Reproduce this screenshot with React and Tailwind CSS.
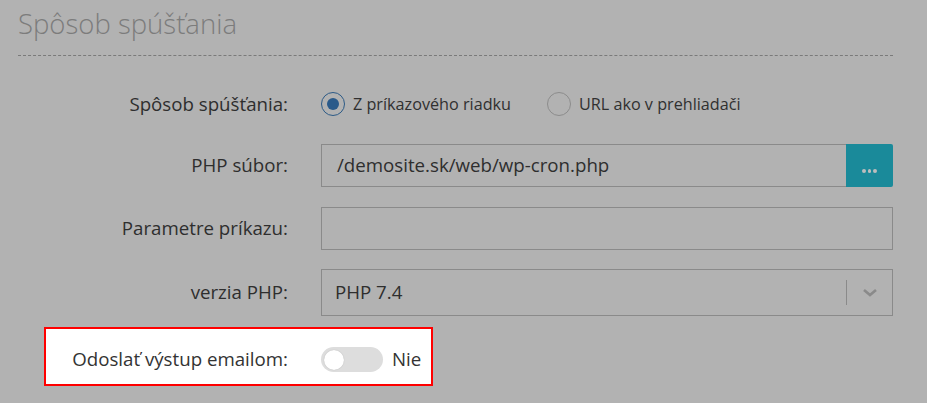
import React from 'react';

const font = { fontFamily: '"Open Sans", "Noto Sans", sans-serif' };

const Label = ({ children }) => (
  <div className="w-[270px] shrink-0 text-right text-[18.7px] text-[#2e2e2e]">{children}</div>
);

const Radio = ({ checked, label }) => (
  <label className="flex items-center">
    {checked ? (
      <span className="flex h-[24px] w-[24px] items-center justify-center rounded-full border-[1.5px] border-[#2c5a86]">
        <span className="h-[12px] w-[12px] rounded-full bg-[#2a5a8a]" />
      </span>
    ) : (
      <span className="h-[24px] w-[24px] rounded-full border-[1.5px] border-[#8c8c8c]" />
    )}
    <span className="ml-[8px] text-[16.2px] text-[#303030]">{label}</span>
  </label>
);

export default function App() {
  return (
    <div className="h-[403px] w-full overflow-hidden bg-[#b2b2b2]" style={font}>
      <div className="w-[893px] pl-[18px]">
        {/* Header */}
        <h2 className="pt-[7px] text-[27.5px] font-light leading-[34px] text-[#7c7c7c]">Spôsob spúšťania</h2>
        <div className="mt-[14px] border-t border-dashed border-[#7a7a7a]" />

        {/* Run mode */}
        <div className="mt-[27px] flex h-[43px] items-center">
          <Label>Spôsob spúšťania:</Label>
          <div className="ml-[33px] flex items-center gap-[36px]">
            <Radio checked label="Z príkazového riadku" />
            <Radio label="URL ako v prehliadači" />
          </div>
        </div>

        {/* PHP file */}
        <div className="mt-[18px] flex h-[43px] items-center">
          <Label>PHP súbor:</Label>
          <div className="ml-[33px] flex h-full flex-1">
            <div className="flex flex-1 items-center border border-r-0 border-[#8a8a8a] pl-[15px] text-[18.7px] text-[#2e2e2e]">
              /demosite.sk/web/wp-cron.php
            </div>
            <button className="flex w-[47px] items-center justify-center gap-[2px] rounded-r-[2px] bg-[#1a8a9a] pt-[11px]">
              <span className="h-[3.5px] w-[3.5px] rounded-full bg-[#bdbdbd]" />
              <span className="h-[3.5px] w-[3.5px] rounded-full bg-[#bdbdbd]" />
              <span className="h-[3.5px] w-[3.5px] rounded-full bg-[#bdbdbd]" />
            </button>
          </div>
        </div>

        {/* Params */}
        <div className="mt-[20px] flex h-[43px] items-center">
          <Label>Parametre príkazu:</Label>
          <div className="ml-[33px] h-full flex-1 border border-[#8a8a8a]" />
        </div>

        {/* PHP version */}
        <div className="mt-[19px] flex h-[47px] items-center">
          <Label>verzia PHP:</Label>
          <div className="ml-[33px] flex h-full flex-1 items-center border border-[#8a8a8a]">
            <span className="flex-1 pl-[13px] text-[18.7px] text-[#2e2e2e]">PHP 7.4</span>
            <span className="h-[25px] w-px bg-[#8a8a8a]" />
            <span className="flex w-[45px] items-center justify-center">
              <svg width="16" height="10" viewBox="0 0 16 10" fill="none">
                <path d="M2 2l6 5 6-5" stroke="#8a8a8a" strokeWidth="2.6" />
              </svg>
            </span>
          </div>
        </div>

        {/* Email output, highlighted */}
        <div className="mt-[11px] flex">
          <div className="ml-[26px] flex h-[59px] w-[389px] items-center border-2 border-[#ff0000] bg-white pt-[6px]">
            <div className="w-[242px] shrink-0 text-right text-[18.7px] text-[#333]">Odoslať výstup emailom:</div>
            <div className="ml-[33px] flex h-[25px] w-[62px] items-center rounded-full bg-[#dddddd] px-[3px]">
              <span className="h-[20px] w-[20px] rounded-full bg-white shadow-[0_0_1px_rgba(0,0,0,0.25)]" />
            </div>
            <span className="ml-[9px] text-[18.7px] text-[#333]">Nie</span>
          </div>
        </div>
      </div>
    </div>
  );
}
